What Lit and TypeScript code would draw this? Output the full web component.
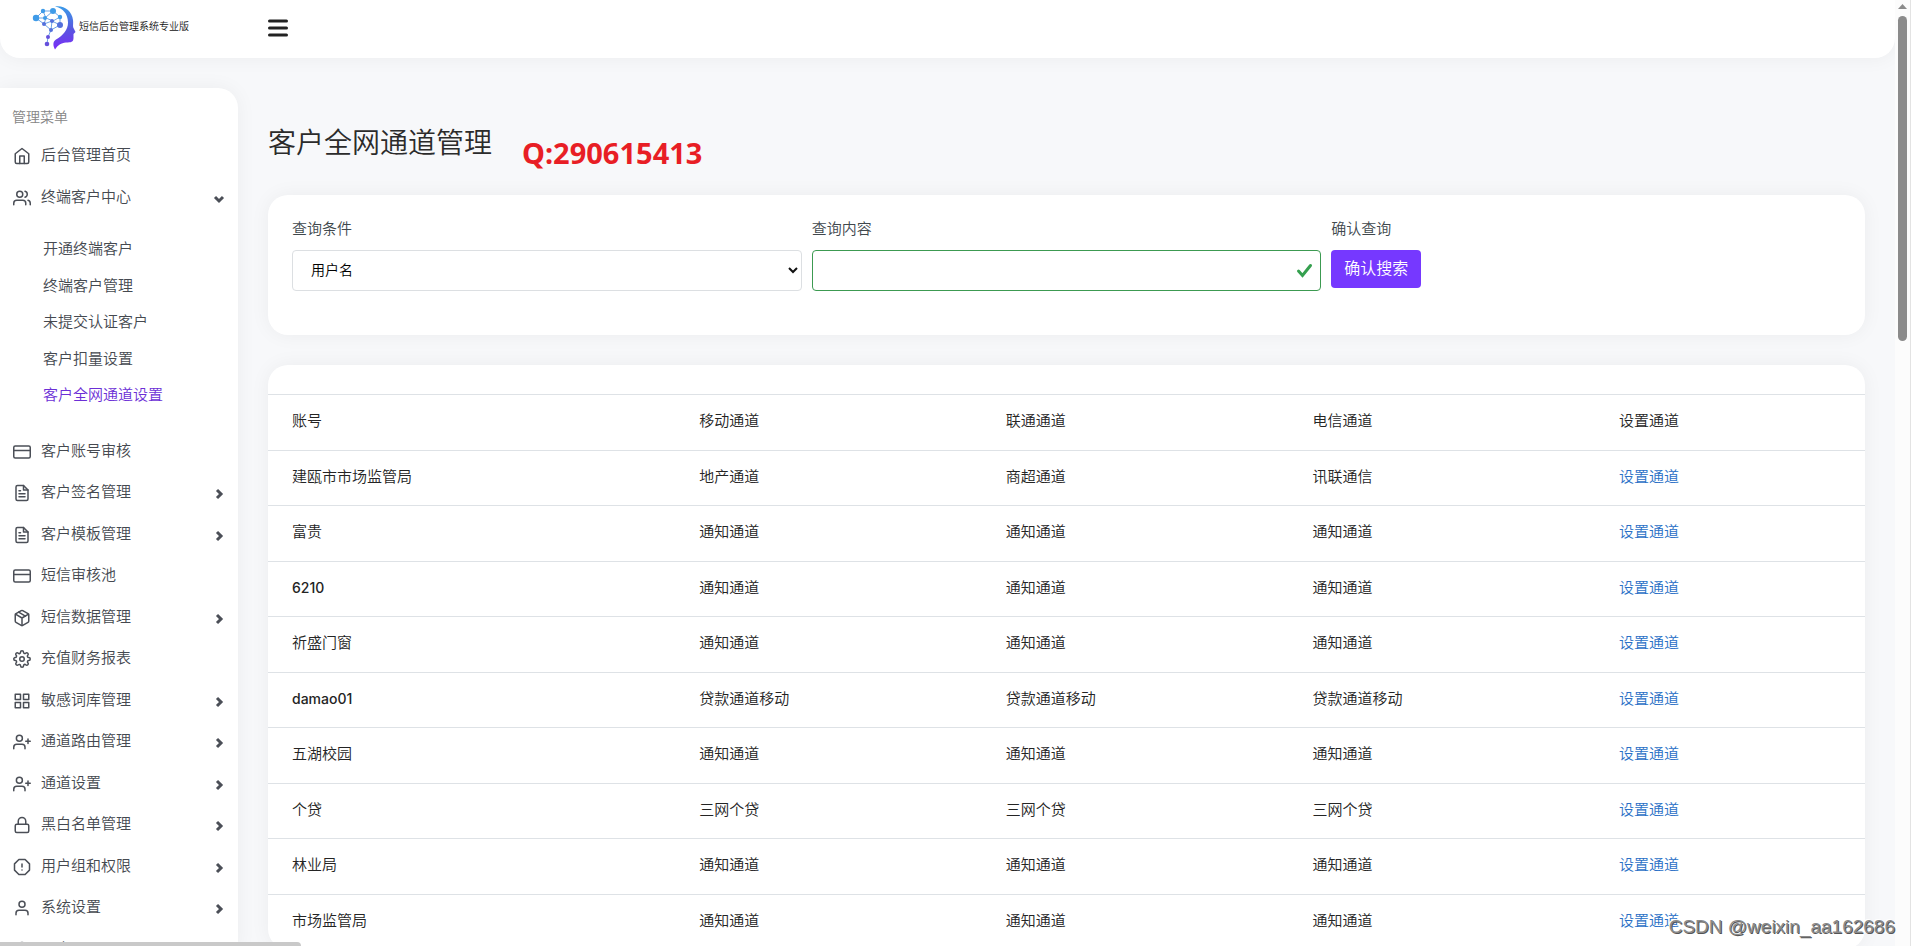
import { LitElement, html, svg, css, TemplateResult } from "lit";
import { customElement, property } from "lit/decorators.js";

const icons: Record<string, TemplateResult> = {
  home: svg`<path d="M3 9l9-7 9 7v11a2 2 0 0 1-2 2H5a2 2 0 0 1-2-2z"/><path d="M9 22V12h6v10"/>`,
  users: svg`<path d="M17 21v-2a4 4 0 0 0-4-4H5a4 4 0 0 0-4 4v2"/><circle cx="9" cy="7" r="4"/><path d="M23 21v-2a4 4 0 0 0-3-3.87"/><path d="M16 3.13a4 4 0 0 1 0 7.75"/>`,
  card: svg`<rect x="1" y="4" width="22" height="16" rx="2"/><path d="M1 10h22"/>`,
  file: svg`<path d="M14 2H6a2 2 0 0 0-2 2v16a2 2 0 0 0 2 2h12a2 2 0 0 0 2-2V8z"/><path d="M14 2v6h6M16 13H8M16 17H8M10 9H8"/>`,
  box: svg`<path d="M16.5 9.4l-9-5.19"/><path d="M21 16V8a2 2 0 0 0-1-1.73l-7-4a2 2 0 0 0-2 0l-7 4A2 2 0 0 0 3 8v8a2 2 0 0 0 1 1.73l7 4a2 2 0 0 0 2 0l7-4A2 2 0 0 0 21 16z"/><path d="M3.27 6.96L12 12.01l8.73-5.05M12 22.08V12"/>`,
  gear: svg`<circle cx="12" cy="12" r="3"/><path d="M19.4 15a1.65 1.65 0 0 0 .33 1.82l.06.06a2 2 0 0 1 0 2.83 2 2 0 0 1-2.83 0l-.06-.06a1.65 1.65 0 0 0-1.82-.33 1.65 1.65 0 0 0-1 1.51V21a2 2 0 0 1-2 2 2 2 0 0 1-2-2v-.09A1.65 1.65 0 0 0 9 19.4a1.65 1.65 0 0 0-1.82.33l-.06.06a2 2 0 0 1-2.83 0 2 2 0 0 1 0-2.83l.06-.06a1.65 1.65 0 0 0 .33-1.82 1.65 1.65 0 0 0-1.51-1H3a2 2 0 0 1-2-2 2 2 0 0 1 2-2h.09A1.65 1.65 0 0 0 4.6 9a1.65 1.65 0 0 0-.33-1.82l-.06-.06a2 2 0 0 1 0-2.83 2 2 0 0 1 2.83 0l.06.06a1.65 1.65 0 0 0 1.82.33H9a1.65 1.65 0 0 0 1-1.51V3a2 2 0 0 1 2-2 2 2 0 0 1 2 2v.09a1.65 1.65 0 0 0 1 1.51 1.65 1.65 0 0 0 1.82-.33l.06-.06a2 2 0 0 1 2.83 0 2 2 0 0 1 0 2.83l-.06.06a1.65 1.65 0 0 0-.33 1.82V9a1.65 1.65 0 0 0 1.51 1H21a2 2 0 0 1 2 2 2 2 0 0 1-2 2h-.09a1.65 1.65 0 0 0-1.51 1z"/>`,
  grid: svg`<path d="M3 3h7v7H3zM14 3h7v7h-7zM14 14h7v7h-7zM3 14h7v7H3z"/>`,
  userPlus: svg`<path d="M16 21v-2a4 4 0 0 0-4-4H5a4 4 0 0 0-4 4v2"/><circle cx="8.5" cy="7" r="4"/><path d="M20 8v6M23 11h-6"/>`,
  lock: svg`<rect x="3" y="11" width="18" height="11" rx="2"/><path d="M7 11V7a5 5 0 0 1 10 0v4"/>`,
  alert: svg`<path d="M7.86 2h8.28L22 7.86v8.28L16.14 22H7.86L2 16.14V7.86z"/><path d="M12 8v4M12 16h.01"/>`,
  user: svg`<path d="M20 21v-2a4 4 0 0 0-4-4H8a4 4 0 0 0-4 4v2"/><circle cx="12" cy="7" r="4"/>`,
};

interface MenuItem {
  icon: string;
  text: string;
  more?: boolean;
  children?: string[];
}

const menu: MenuItem[] = [
  { icon: "home", text: "后台管理首页" },
  {
    icon: "users",
    text: "终端客户中心",
    children: ["开通终端客户", "终端客户管理", "未提交认证客户", "客户扣量设置", "客户全网通道设置"],
  },
  { icon: "card", text: "客户账号审核" },
  { icon: "file", text: "客户签名管理", more: true },
  { icon: "file", text: "客户模板管理", more: true },
  { icon: "card", text: "短信审核池" },
  { icon: "box", text: "短信数据管理", more: true },
  { icon: "gear", text: "充值财务报表" },
  { icon: "grid", text: "敏感词库管理", more: true },
  { icon: "userPlus", text: "通道路由管理", more: true },
  { icon: "userPlus", text: "通道设置", more: true },
  { icon: "lock", text: "黑白名单管理", more: true },
  { icon: "alert", text: "用户组和权限", more: true },
  { icon: "user", text: "系统设置", more: true },
  { icon: "lock", text: "退出" },
];

const rows: string[][] = [
  ["建瓯市市场监管局", "地产通道", "商超通道", "讯联通信"],
  ["富贵", "通知通道", "通知通道", "通知通道"],
  ["6210", "通知通道", "通知通道", "通知通道"],
  ["祈盛门窗", "通知通道", "通知通道", "通知通道"],
  ["damao01", "贷款通道移动", "贷款通道移动", "贷款通道移动"],
  ["五湖校园", "通知通道", "通知通道", "通知通道"],
  ["个贷", "三网个贷", "三网个贷", "三网个贷"],
  ["林业局", "通知通道", "通知通道", "通知通道"],
  ["市场监管局", "通知通道", "通知通道", "通知通道"],
];

@customElement("app-header")
export class AppHeader extends LitElement {
  static styles = css`
    :host {
      box-sizing: border-box;
      display: flex;
      align-items: center;
      height: 58px;
      padding-bottom: 2px;
      background: #fff;
      border-radius: 0 0 20px 20px;
      box-shadow: 0 0 20px rgba(0, 0, 0, 0.05);
    }
    .brand {
      box-sizing: border-box;
      width: 238px;
      padding-left: 32px;
      display: flex;
      align-items: center;
      gap: 3px;
      color: #111;
      font-size: 10px;
      font-weight: 500;
      line-height: 16px;
      text-decoration: none;
      white-space: nowrap;
    }
    .logo {
      width: 44px;
      height: 44px;
      flex: none;
    }
    .name {
      padding-bottom: 4px;
    }
    .toggle {
      margin-left: 30px;
      padding: 0;
      border: 0;
      background: none;
      line-height: 0;
      cursor: pointer;
    }
  `;
  render() {
    return html`
      <a class="brand" href="#">
        <svg class="logo" viewBox="0 0 44 44" aria-hidden="true">
          <defs>
            <linearGradient id="g" x1="0" y1="0" x2="0" y2="1">
              <stop offset="0" stop-color="#3a9be8" />
              <stop offset="0.55" stop-color="#5a55e0" />
              <stop offset="1" stop-color="#7a2cf8" />
            </linearGradient>
          </defs>
          <path
            fill="url(#g)"
            d="M23 0.500C32 -1 40 5 41 14C41.500 18 40.500 20 41.500 22L43.500 26L41.500 28L41.500 32C41.500 36 39 36.500 34 36.500C29 37 26 39 23 43.500C20.500 39 21 35.500 24 33.500C31 29.500 36 24 36 16.500C36 8 31 2 23 0.500z"
          />
          <g stroke="#5a9be4" stroke-width="0.900" fill="none">
            <path d="M4 12L11 5L21 5L28 11L28 19L19 24L12 18L4 12H13L21 5M11 5L14 12L21 15L28 11M14 12L12 18L20 15L28 19M20 15L19 24L16 31L15 38" />
          </g>
          <g fill="#3f9be8">
            <circle cx="4" cy="12" r="3.200" /><circle cx="11" cy="5" r="2.200" /><circle cx="21" cy="5" r="3" />
            <circle cx="13" cy="12" r="2" /><circle cx="28" cy="11" r="2.200" />
          </g>
          <g fill="#5370dc">
            <circle cx="12" cy="18" r="2" /><circle cx="20" cy="15" r="2" /><circle cx="28" cy="19" r="3" />
            <circle cx="19" cy="24" r="2" />
          </g>
          <g fill="#6550dc"><circle cx="16" cy="31" r="2" /><circle cx="15" cy="38" r="2.300" /></g>
        </svg>
        <span class="name">短信后台管理系统专业版</span>
      </a>
      <button class="toggle" aria-label="切换菜单">
        <svg width="20" height="18" viewBox="0 0 20 18" stroke="#222" stroke-width="3" stroke-linecap="round">
          <path d="M1.500 2h17M1.500 9h17M1.500 16h17" />
        </svg>
      </button>
    `;
  }
}

@customElement("app-sidebar")
export class AppSidebar extends LitElement {
  @property() active = "客户全网通道设置";
  static styles = css`
    :host {
      box-sizing: border-box;
      display: block;
      overflow: hidden;
      padding-top: 18px;
      background: #fff;
      border-radius: 0 20px 0 0;
      box-shadow: 0 0 20px rgba(0, 0, 0, 0.05);
    }
    .caption {
      margin: 0 0 7px;
      padding-left: 12px;
      font-size: 14px;
      line-height: 22px;
      color: #858585;
    }
    .list {
      margin: 0;
      padding: 0;
      list-style: none;
    }
    .item {
      display: flex;
      align-items: center;
      gap: 10px;
      margin-bottom: 1px;
      padding: 9px 13px;
      font-size: 15px;
      line-height: 1.5;
      color: #454950;
      text-decoration: none;
    }
    .icon {
      width: 18px;
      height: 18px;
      margin-top: 2px;
      flex: none;
      fill: none;
      stroke: #4b4f57;
      stroke-width: 2;
      stroke-linecap: round;
      stroke-linejoin: round;
    }
    .text {
      flex: 1;
    }
    .chevron {
      width: 12px;
      height: 12px;
      margin-top: 4px;
      flex: none;
      fill: none;
      stroke: #4b4f57;
      stroke-width: 3;
    }
    .sub {
      margin: 0;
      padding: 13px 0 17px;
      list-style: none;
    }
    .link {
      display: block;
      padding: 7px 14px 7px 43px;
      font-size: 15px;
      line-height: 1.5;
      color: #454950;
      text-decoration: none;
    }
    .link.on {
      color: #6c2fd6;
    }
  `;
  render() {
    return html`
      <p class="caption">管理菜单</p>
      <ul class="list">
        ${menu.map(
          (m) => html`<li>
            <a class="item" href="#">
              <svg class="icon" viewBox="0 0 24 24" overflow="visible">${icons[m.icon]}</svg>
              <span class="text">${m.text}</span>
              ${m.children
                ? html`<svg class="chevron" viewBox="0 0 12 12"><path d="M2 4l4 4 4-4" /></svg>`
                : m.more
                  ? html`<svg class="chevron" viewBox="0 0 12 12"><path d="M4 2l4 4-4 4" /></svg>`
                  : ""}
            </a>
            ${m.children
              ? html`<ul class="sub">
                  ${m.children.map(
                    (c) => html`<li><a class="link ${c === this.active ? "on" : ""}" href="#">${c}</a></li>`
                  )}
                </ul>`
              : ""}
          </li>`
        )}
      </ul>
    `;
  }
}

@customElement("search-card")
export class SearchCard extends LitElement {
  static styles = css`
    :host {
      display: block;
      padding: 22px 24px 44px;
      background: #fff;
      border-radius: 20px;
      box-shadow: 0 0 20px rgba(0, 0, 0, 0.05);
    }
    .form {
      display: grid;
      grid-template-columns: repeat(3, 1fr);
      gap: 10px;
      align-items: start;
    }
    .field {
      display: flex;
      flex-direction: column;
      align-items: flex-start;
      gap: 10px;
    }
    .label {
      font-size: 15px;
      line-height: 23px;
      color: #40484d;
    }
    .wrap {
      position: relative;
      width: 100%;
    }
    .control {
      box-sizing: border-box;
      display: block;
      width: 100%;
      height: 41px;
      padding: 0 18px 2px;
      border: 1px solid #dcdfe2;
      border-radius: 4px;
      background: #fff;
      color: #000;
      font: inherit;
      font-size: 14px;
      appearance: none;
      outline: none;
    }
    .valid {
      border-color: #3c9a51;
    }
    .arrow {
      position: absolute;
      right: 3px;
      top: 14px;
      pointer-events: none;
    }
    .check {
      position: absolute;
      right: 8px;
      top: 12px;
      pointer-events: none;
    }
    .submit {
      height: 38px;
      padding: 0 13px 2px;
      border: 0;
      border-radius: 4px;
      background: #7638ff;
      color: #fff;
      font: inherit;
      font-size: 16px;
      line-height: 24px;
      cursor: pointer;
    }
  `;
  render() {
    return html`
      <form class="form" @submit=${(e: Event) => e.preventDefault()}>
        <div class="field">
          <label class="label" for="kind">查询条件</label>
          <div class="wrap">
            <select class="control" id="kind">
              <option>用户名</option>
            </select>
            <svg class="arrow" width="12" height="12" viewBox="0 0 12 12" fill="none" stroke="#111" stroke-width="2">
              <path d="M2 4l4 4 4-4" />
            </svg>
          </div>
        </div>
        <div class="field">
          <label class="label" for="word">查询内容</label>
          <div class="wrap">
            <input class="control valid" id="word" type="text" />
            <svg class="check" width="17" height="16" viewBox="0 0 17 16" fill="none" stroke="#35a04f" stroke-width="3" stroke-linecap="round">
              <path d="M2.500 9l4 4.500 8-10" />
            </svg>
          </div>
        </div>
        <div class="field">
          <label class="label" for="go">确认查询</label>
          <button class="submit" id="go" type="submit">确认搜索</button>
        </div>
      </form>
    `;
  }
}

@customElement("channel-table")
export class ChannelTable extends LitElement {
  static styles = css`
    :host {
      display: block;
      padding-top: 29px;
      background: #fff;
      border-radius: 20px;
      box-shadow: 0 0 20px rgba(0, 0, 0, 0.05);
    }
    .table {
      width: 100%;
      table-layout: fixed;
      border-spacing: 0;
      font-size: 15px;
      line-height: 1.5;
      color: #242424;
    }
    .cell {
      padding: 15px 24px 17px;
      border-top: 1px solid #dee2e6;
      text-align: left;
      font-weight: inherit;
      width: 19.2%;
      box-sizing: border-box;
    }
    .first {
      width: 25.5%;
    }
    .last {
      width: auto;
    }
    .name {
      font-size: 14px;
      font-weight: 500;
    }
    .link {
      color: #2a70c6;
      text-decoration: none;
    }
  `;
  render() {
    return html`
      <table class="table">
        <thead>
          <tr>
            <th class="cell first">账号</th>
            <th class="cell">移动通道</th>
            <th class="cell">联通通道</th>
            <th class="cell">电信通道</th>
            <th class="cell last">设置通道</th>
          </tr>
        </thead>
        <tbody>
          ${rows.map(
            (r) => html`<tr>
              ${r.map((c) => html`<td class="cell"><span class=${/^\w+$/.test(c) ? "name" : ""}>${c}</span></td>`)}
              <td class="cell"><a class="link" href="#">设置通道</a></td>
            </tr>`
          )}
        </tbody>
      </table>
    `;
  }
}

@customElement("app-root")
export class AppRoot extends LitElement {
  static styles = css`
    :host {
      position: relative;
      display: grid;
      grid-template-columns: minmax(0, 1fr) 16px;
      height: 100vh;
      overflow: hidden;
      background: #f7f8fa;
      color: #2b2b2b;
      font-family: Inter, "Noto Sans CJK SC DemiLight", "Noto Sans CJK SC", sans-serif;
      font-weight: 350;
    }
    .page {
      display: flex;
      flex-direction: column;
      min-height: 0;
      overflow: hidden;
    }
    .body {
      display: grid;
      grid-template-columns: 238px minmax(0, 1fr);
      gap: 30px;
      padding: 30px 30px 0 0;
      flex: 1;
      min-height: 0;
    }
    .head {
      display: flex;
      align-items: flex-start;
      gap: 30px;
      padding: 33px 0 30px;
    }
    .title {
      margin: 0;
      font-size: 28px;
      font-weight: inherit;
      line-height: 44px;
    }
    .contact {
      margin: 0;
      padding-top: 20px;
      font-family: "Noto Sans", "Open Sans", sans-serif;
      font-size: 29px;
      font-weight: 700;
      line-height: 24px;
      color: #e81e25;
    }
    .main {
      display: flex;
      flex-direction: column;
    }
    .cards {
      display: flex;
      flex-direction: column;
      gap: 30px;
    }
    .track {
      display: flex;
      flex-direction: column;
      align-items: center;
      gap: 7px;
      padding-top: 4px;
      background: #fcfcfc;
      border-right: 1px solid #e3e3e3;
    }
    .thumb {
      width: 9px;
      height: 325px;
      border-radius: 5px;
      background: #8b8b8b;
    }
    .hbar {
      position: absolute;
      left: 0;
      bottom: 0;
      width: 301px;
      height: 4px;
      border-radius: 0 4px 0 0;
      background: #c9c9c9;
    }
    .mark {
      position: absolute;
      right: 16px;
      bottom: 6px;
      font-family: "Liberation Sans", sans-serif;
      font-size: 19px;
      line-height: 26px;
      color: #8a8a8a;
      text-shadow: 1px 1px 0 #555, -1px -1px 0 #fff;
    }
  `;
  render() {
    return html`
      <div class="page">
        <app-header></app-header>
        <div class="body">
          <app-sidebar></app-sidebar>
          <main class="main">
            <div class="head">
              <h1 class="title">客户全网通道管理</h1>
              <p class="contact">Q:290615413</p>
            </div>
            <div class="cards">
              <search-card></search-card>
              <channel-table></channel-table>
            </div>
          </main>
        </div>
      </div>
      <div class="track">
        <svg width="9" height="5" viewBox="0 0 9 5"><path d="M4.500 0L9 5H0z" fill="#8b8b8b" /></svg>
        <div class="thumb"></div>
      </div>
      <div class="hbar"></div>
      <div class="mark">CSDN @weixin_aa162686</div>
    `;
  }
}
